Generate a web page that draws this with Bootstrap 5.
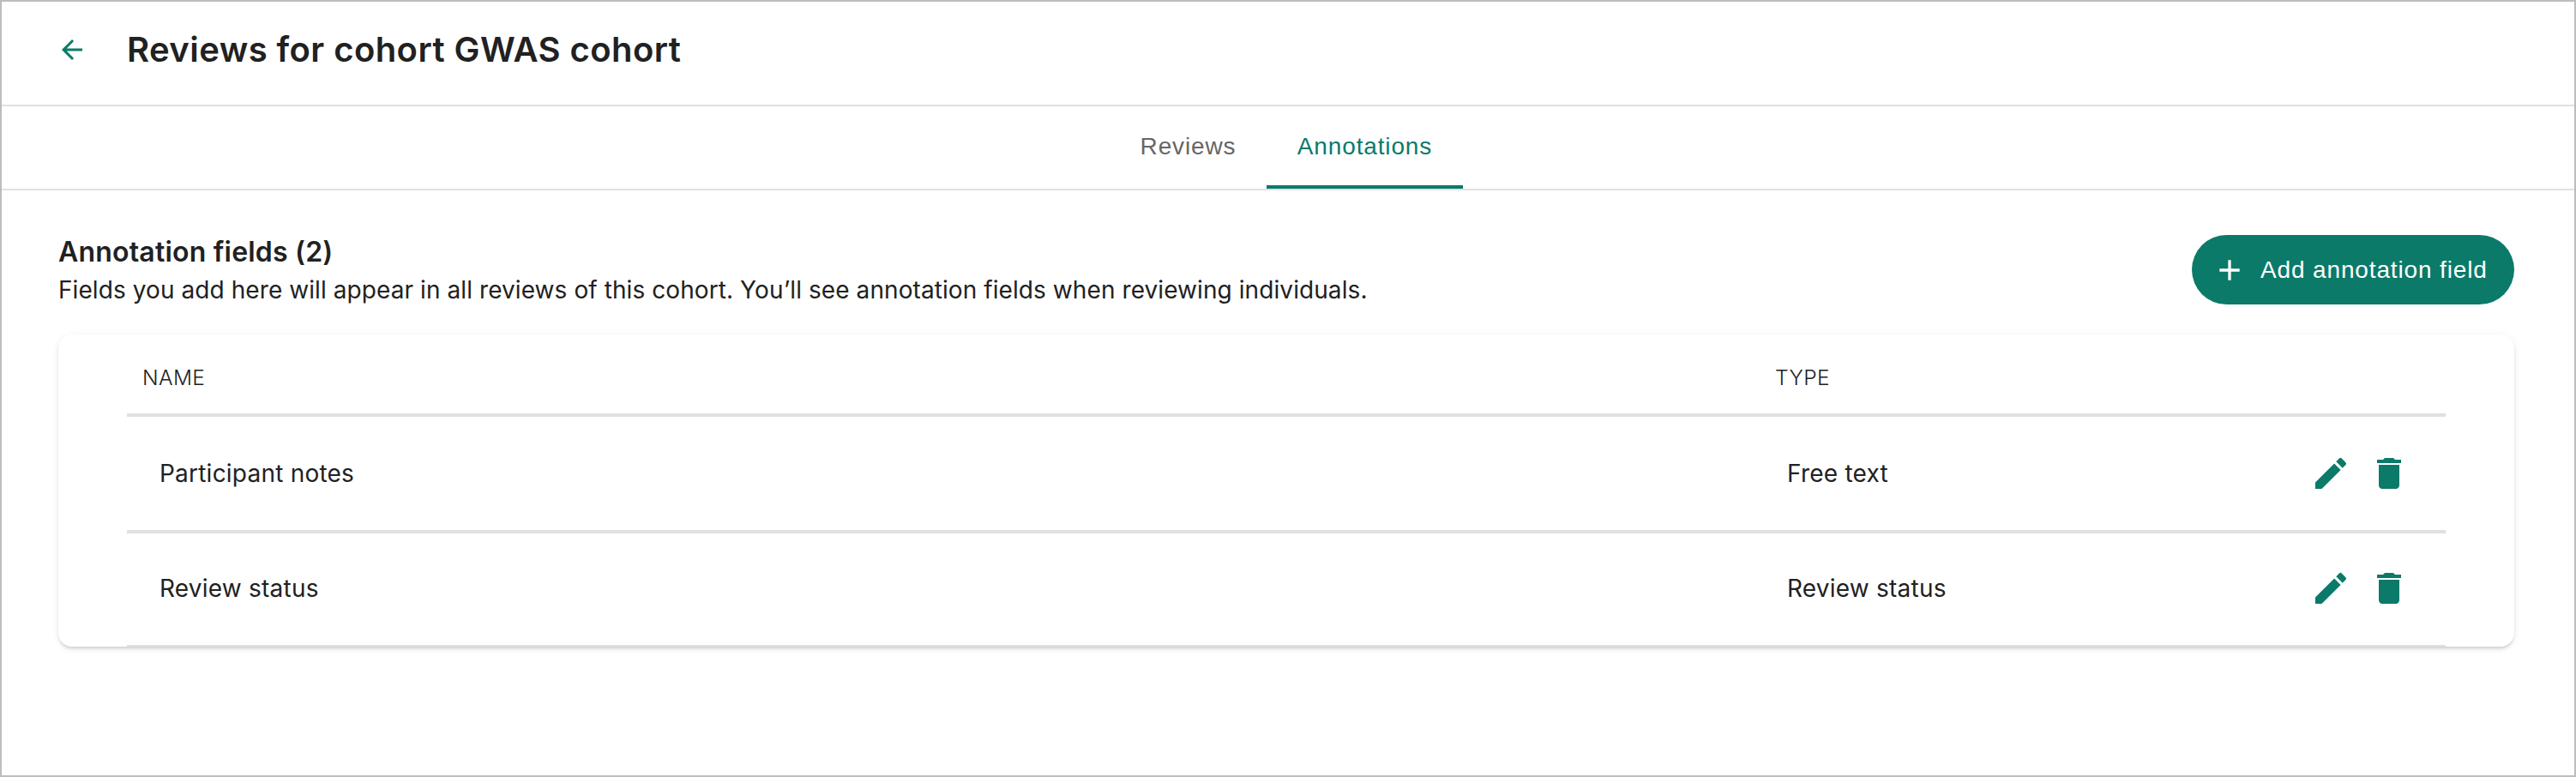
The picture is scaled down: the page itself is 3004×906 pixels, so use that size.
<!DOCTYPE html>
<html lang="en">
<head>
<meta charset="utf-8">
<title>Reviews for cohort GWAS cohort</title>
<link href="https://cdn.jsdelivr.net/npm/bootstrap@5.3.0/dist/css/bootstrap.min.css" rel="stylesheet">
<style>
:root{--teal:#0b7a69;--line:#e0e0e0}
body{font-family:Inter,sans-serif;font-size:28px;line-height:42px;letter-spacing:.22px;color:#212121;background:#fff}
.frame{height:906px;border:2px solid #bdbdbd}
.topbar{height:122px;padding:32px 0 0 64px;border-bottom:2px solid var(--line)}
.topbar svg{margin-top:6px}
.page-title{margin:0 0 0 46px;font-size:40px;line-height:48px;font-weight:600;letter-spacing:.43px}
.tabbar{height:98px;border-bottom:2px solid var(--line)}
.tabbar .nav-link,.add-btn{font-family:"Liberation Sans",sans-serif;font-size:28px;line-height:48px;letter-spacing:.86px}
.tabbar .nav-link{height:96px;padding:23px 4px 0 0;text-align:center;color:#666;border-radius:0;width:179px}
.tabbar .nav-link.active{width:229px;padding-right:0;color:var(--teal);border-bottom:4px solid var(--teal)}
.content-area{padding:52px 70px 0 66px}
.section-title{font-size:32px;line-height:44px;font-weight:600;letter-spacing:.2px;margin:-2px 0 0}
.intro{padding-top:1px;letter-spacing:.08px}
.add-btn{width:376px;height:81px;padding:0 0 0 24px;background:var(--teal);color:#fff;border:0;gap:16px}
.fields-card{margin-top:31px;height:364px;padding:0 80px;border:0;border-radius:16px;overflow:hidden;box-shadow:0 4px 4px -2px rgba(0,0,0,.1),0 2px 3px rgba(0,0,0,.06),0 2px 10px rgba(0,0,0,.08)}
.fields-table{margin:0;table-layout:fixed;color:inherit;border-collapse:separate;border-spacing:0}
.fields-table>:not(caption)>*>*{border-bottom:4px solid var(--line);padding:0 0 0 38px;vertical-align:middle;color:inherit;height:136px;line-height:42px}
.fields-table>thead>tr>th{height:96px;font-size:24.5px;font-weight:300;letter-spacing:.4px;padding:8px 0 0 18px}
.fields-table>thead>tr>th:nth-child(2){padding-left:16px}
.fields-table>tbody>tr>td:nth-child(2){padding-left:30px}
.fields-table>tbody>tr>td:last-child{padding-left:0}
.fields-table>tbody>tr:last-child>td{height:134px;padding-bottom:2px}
.col-name{width:1906px}
.col-type{width:640px}
.icons{gap:20px;color:var(--teal)}
</style>
</head>
<body>
<div class="frame">
  <header class="topbar d-flex align-items-start">
    <svg width="36" height="36" viewBox="0 0 24 24" fill="#0b7a69"><path d="M20 11H7.83l5.59-5.59L12 4l-8 8 8 8 1.41-1.41L7.83 13H20v-2z"/></svg>
    <h1 class="page-title">Reviews for cohort GWAS cohort</h1>
  </header>
  <nav class="tabbar nav justify-content-center">
    <a class="nav-link">Reviews</a>
    <a class="nav-link active">Annotations</a>
  </nav>
  <main class="content-area">
    <div class="d-flex justify-content-between align-items-start">
      <div>
        <h2 class="section-title">Annotation fields (2)</h2>
        <div class="intro">Fields you add here will appear in all reviews of this cohort. You’ll see annotation fields when reviewing individuals.</div>
      </div>
      <button class="btn add-btn rounded-pill d-flex align-items-center"><svg width="40" height="40" viewBox="0 0 24 24" fill="currentColor"><path d="M19 13h-6v6h-2v-6H5v-2h6V5h2v6h6v2z"/></svg><span>Add annotation field</span></button>
    </div>
    <section class="card fields-card">
      <table class="table fields-table">
        <colgroup><col class="col-name"><col class="col-type"><col></colgroup>
        <thead><tr><th>NAME</th><th>TYPE</th><th></th></tr></thead>
        <tbody>
          <tr>
            <td>Participant notes</td><td>Free text</td>
            <td><div class="icons d-flex">
              <svg width="48" height="48" viewBox="0 0 24 24" fill="currentColor"><path d="M3 17.25V21h3.75L17.81 9.94l-3.75-3.75L3 17.25zM20.71 7.04c.39-.39.39-1.02 0-1.41l-2.34-2.34a.996.996 0 0 0-1.41 0l-1.83 1.83 3.75 3.75 1.83-1.83z"/></svg>
              <svg width="48" height="48" viewBox="0 0 24 24" fill="currentColor"><path d="M6 19c0 1.1.9 2 2 2h8c1.1 0 2-.9 2-2V7H6v12zM19 4h-3.5l-1-1h-5l-1 1H5v2h14V4z"/></svg>
            </div></td>
          </tr>
          <tr>
            <td>Review status</td><td>Review status</td>
            <td><div class="icons d-flex">
              <svg width="48" height="48" viewBox="0 0 24 24" fill="currentColor"><path d="M3 17.25V21h3.75L17.81 9.94l-3.75-3.75L3 17.25zM20.71 7.04c.39-.39.39-1.02 0-1.41l-2.34-2.34a.996.996 0 0 0-1.41 0l-1.83 1.83 3.75 3.75 1.83-1.83z"/></svg>
              <svg width="48" height="48" viewBox="0 0 24 24" fill="currentColor"><path d="M6 19c0 1.1.9 2 2 2h8c1.1 0 2-.9 2-2V7H6v12zM19 4h-3.5l-1-1h-5l-1 1H5v2h14V4z"/></svg>
            </div></td>
          </tr>
        </tbody>
      </table>
    </section>
  </main>
</div>
<script src="https://cdn.jsdelivr.net/npm/bootstrap@5.3.0/dist/js/bootstrap.bundle.min.js"></script>
</body>
</html>
